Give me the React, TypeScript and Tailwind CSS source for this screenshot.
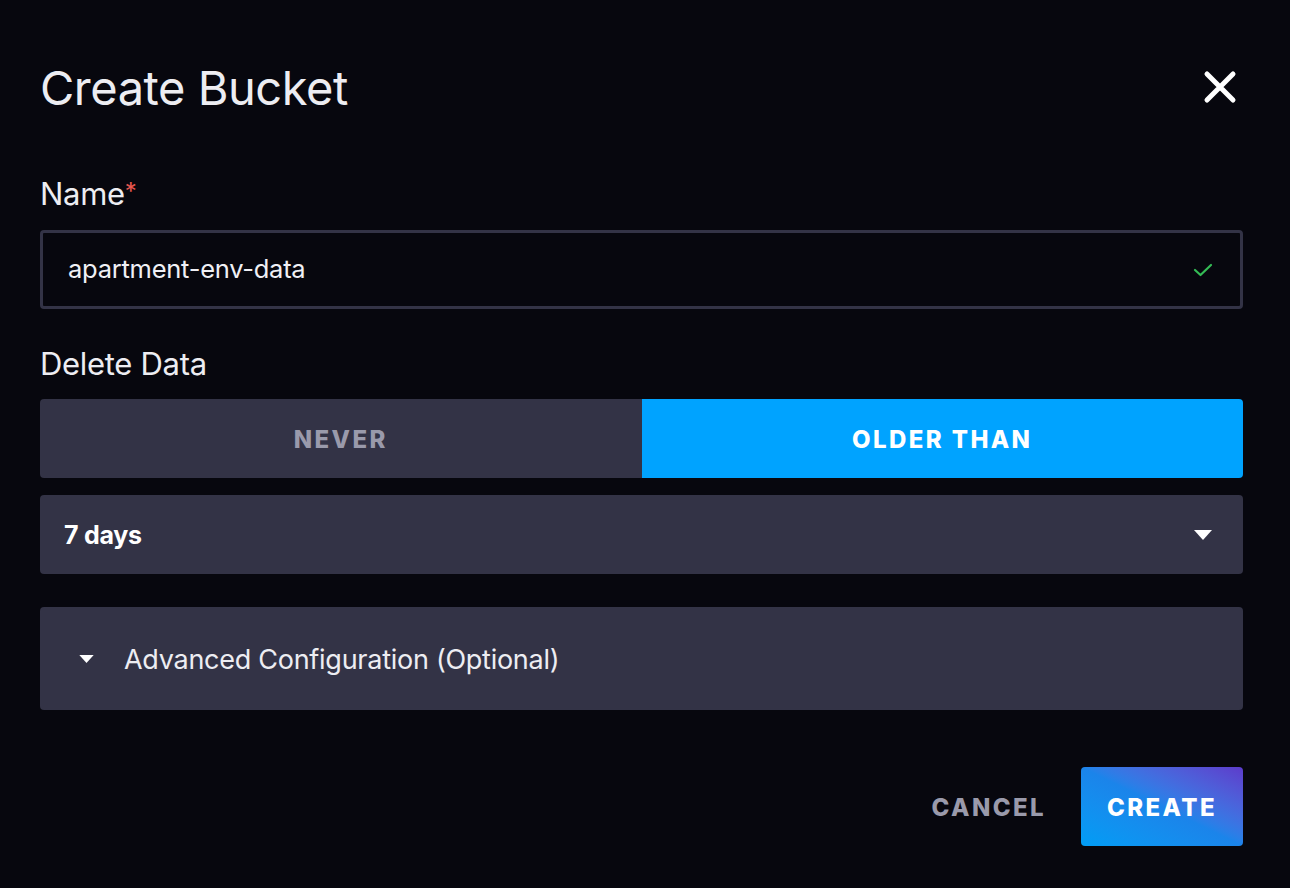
const font = { fontFamily: 'Inter, Lato, "Noto Sans", sans-serif' };

function Caret({ className = '' }: { className?: string }) {
  return (
    <svg viewBox="0 0 18 10" className={className} fill="white">
      <path d="M0 0 L18 0 L9 10 Z" />
    </svg>
  );
}

export default function App() {
  return (
    <div
      className="h-[888px] w-[1290px] overflow-hidden bg-[#07070e] pl-10 pr-[47px] text-white"
      style={font}
    >
      <div className="flex h-[176px] items-start justify-between pt-[60px]">
        <h1 className="text-[47px] leading-[56px] tracking-[-0.01em] text-[#ededf2]">Create Bucket</h1>
        <button className="mr-[6px] mt-[10px] text-white">
          <svg viewBox="0 0 34 34" className="h-[34px] w-[34px]" stroke="white" strokeWidth="5" strokeLinecap="round">
            <path d="M4 4 L30 30 M30 4 L4 30" />
          </svg>
        </button>
      </div>

      <label className="block text-[31px] leading-[36px] tracking-[-0.01em] text-[#ededf2]">
        Name<span className="relative -top-[5px] text-[24px] text-[#e8574f]">*</span>
      </label>
      <div className="mt-[15px] flex h-[79px] items-center justify-between rounded-[4px] border-[3px] border-[#333346] pl-[25px] pr-[27px]">
        <span className="text-[25.5px] tracking-[-0.01em] text-[#f0f0f5]">apartment-env-data</span>
        <svg viewBox="0 0 20 14" className="h-[14px] w-[20px]" fill="none" stroke="#34bb55" strokeWidth="2.2" strokeLinecap="round" strokeLinejoin="round">
          <path d="M2 7 L7.5 12 L18 2" />
        </svg>
      </div>

      <label className="mt-[37px] block text-[31px] leading-[36px] tracking-[-0.01em] text-[#ededf2]">Delete Data</label>
      <div className="mt-[17px] flex h-[79px] overflow-hidden rounded-[4px]">
        <button className="flex flex-1 items-center justify-center bg-[#333346] pt-[3px] text-[24px] font-extrabold tracking-[0.1em] text-[#9a9aab]">
          NEVER
        </button>
        <button className="flex flex-1 items-center justify-center bg-[#00a3ff] pt-[3px] text-[24px] font-extrabold tracking-[0.1em] text-white">
          OLDER THAN
        </button>
      </div>

      <div className="mt-[17px] flex h-[79px] items-center justify-between rounded-[4px] bg-[#333346] pl-[24px] pr-[31px]">
        <span className="pt-[3px] text-[25px] font-bold tracking-[-0.01em] text-white">7 days</span>
        <Caret className="h-[10px] w-[18px]" />
      </div>

      <div className="mt-[33px] flex h-[103px] items-center rounded-[4px] bg-[#333346] pl-[39px]">
        <Caret className="h-[8px] w-[15px]" />
        <span className="ml-[30px] pt-[3px] text-[27px] tracking-[-0.01em] text-[#ededf2]">Advanced Configuration (Optional)</span>
      </div>

      <div className="mt-[57px] flex items-center justify-end">
        <button className="mr-[35px] pt-[3px] text-[24px] font-extrabold tracking-[0.1em] text-[#9a9aab]">CANCEL</button>
        <button className="flex h-[79px] w-[162px] items-center justify-center rounded-[4px] bg-gradient-to-tr from-[#009df5] via-[#1b84ea] to-[#5c3bcb] pt-[3px] text-[24px] font-extrabold tracking-[0.1em] text-white">
          CREATE
        </button>
      </div>
    </div>
  );
}
